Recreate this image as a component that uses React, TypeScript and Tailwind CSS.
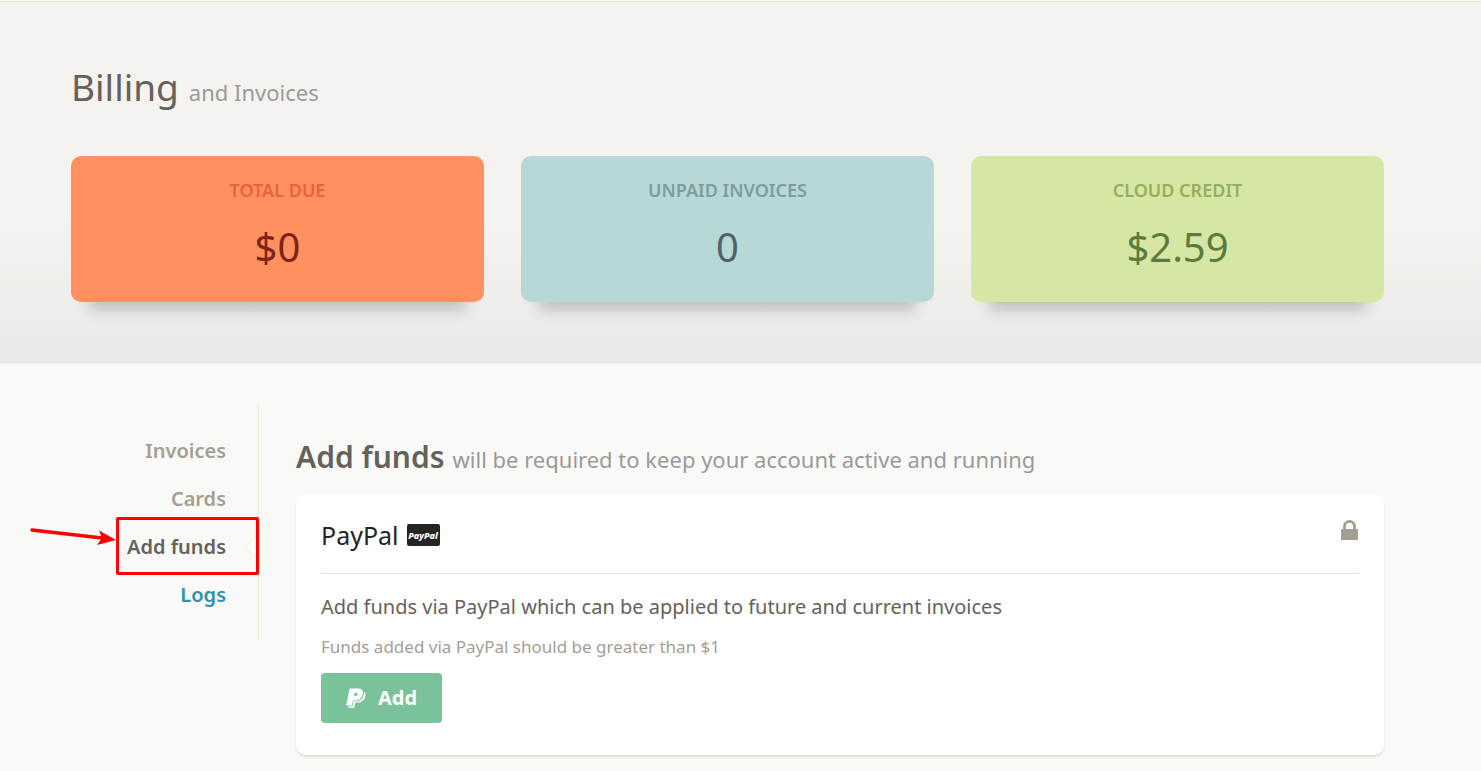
import React from "react";

type Stat = { label: string; value: string; card: string; labelColor: string; valueColor: string };

const stats: Stat[] = [
  { label: "Total due", value: "$0", card: "bg-[#ff9060]", labelColor: "text-[#e9633a]", valueColor: "text-[#7d2413]" },
  { label: "Unpaid invoices", value: "0", card: "bg-[#b8d8d8]", labelColor: "text-[#7a9e9f]", valueColor: "text-[#4f6367]" },
  { label: "Cloud credit", value: "$2.59", card: "bg-[#d6e6a5]", labelColor: "text-[#96ad5b]", valueColor: "text-[#5e7b3e]" },
];

const tabs = [
  { label: "Invoices", color: "text-[#a49e93]" },
  { label: "Cards", color: "text-[#a49e93]" },
  { label: "Add funds", color: "text-[#66615b]", active: true },
  { label: "Logs", color: "text-[#3091b2]" },
];

function StatCard({ stat }: { stat: Stat }) {
  return (
    <article
      className={`flex flex-col items-center rounded-[10px] pt-5 pb-[30px] shadow-[0_26px_14px_-18px_rgba(0,0,0,0.2)] ${stat.card}`}
    >
      <h2 className={`text-[18px] leading-7 font-semibold uppercase ${stat.labelColor}`}>{stat.label}</h2>
      <p className={`mt-[18px] text-[40px] leading-[50px] ${stat.valueColor}`}>{stat.value}</p>
    </article>
  );
}

function Callout() {
  return (
    <>
      <span className="pointer-events-none absolute -top-1.5 -right-px h-[58px] w-[143px] rounded-[2px] border-[3px] border-[#fe0000]" />
      <svg
        className="pointer-events-none absolute top-0.5 right-[142px] h-8 w-[88px]"
        viewBox="0 0 88 32"
        fill="none"
        aria-hidden="true"
      >
        <path d="M4 5 L74 13" stroke="#fe0000" strokeWidth="3.5" strokeLinecap="round" />
        <path d="M88 15 L71 5.500 L74 13 L69 20 Z" fill="#fe0000" />
      </svg>
    </>
  );
}

function LockIcon() {
  return (
    <svg className="h-[22px] w-[18px] shrink-0" viewBox="0 0 18 22" role="img" aria-label="Secure">
      <path d="M3.500 12 V7.500 A5 5.200 0 0 1 13.500 7.500 V12" fill="none" stroke="#a49e93" strokeWidth="2.800" />
      <rect y="10" width="17" height="11" rx="0.800" fill="#a49e93" />
    </svg>
  );
}

function PaypalGlyph() {
  return (
    <svg className="size-5" viewBox="0 0 20 20" fill="currentColor" aria-hidden="true">
      <path
        fillRule="evenodd"
        d="M3.600 0.500 H12 C15.800 0.500 17.500 2.600 16.700 6.200 C15.800 10.300 13 12.400 9.200 12.400 H7 L5.800 17.400 H0.200 Z M8.700 4.700 L7.900 8 H9 C10.500 8 11.300 7.400 11.600 6.200 C11.800 5.100 11.400 4.700 10.100 4.700 Z"
      />
      <path
        d="M18 3.300 C19.500 4.700 19.900 6.600 19.300 8.800 C18.300 12.500 15.300 14.600 11.300 14.600 H9.300 L8.100 19.700 H2.200 L2.500 18.200 H6.500 L7.700 13.200 H9.900 C14 13.200 16.900 10.900 17.700 6.700 C18 5.500 18.100 4.300 18 3.300 Z"
      />
    </svg>
  );
}

export default function App() {
  return (
    <div className="min-h-screen bg-[#f9f9f8] font-['Noto_Sans',sans-serif] text-[#66615b]">
      <header className="border-t border-[#fcfcf5] bg-[#f4f3ef]">
        <div className="border-t border-b border-t-[#e4e4da] border-b-[#f2f1ee] bg-linear-to-b from-[#f4f3ef] from-60% to-[#eae9e5] pt-[60px] pr-[97px] pb-[61px] pl-[71px]">
          <h1 className="flex items-baseline gap-2.5 text-[37px] leading-[50px]">
            Billing <small className="text-[22px] text-[#9a9a9a]">and Invoices</small>
          </h1>
          <div className="mt-[39px] grid grid-cols-3 gap-[37px]">
            {stats.map((s) => (
              <StatCard key={s.label} stat={s} />
            ))}
          </div>
        </div>
      </header>

      <div className="flex items-start gap-[37px] pt-10 pr-[97px] pb-4 pl-[71px]">
        <nav aria-label="Billing" className="w-[188px] shrink-0 border-r border-[#f1eae0] pt-[23px] pb-[22px]">
          <ul>
            {tabs.map((t) => (
              <li key={t.label} className="relative h-12">
                <a href="#" className={`block pr-8 text-right text-[20px] leading-[48px] font-semibold ${t.color}`}>
                  {t.label}
                </a>
                {t.active && (
                  <>
                    <svg
                      className="absolute top-2.5 -right-px h-7 w-[14px]"
                      viewBox="0 0 14 28"
                      aria-hidden="true"
                    >
                      <path d="M14 0.500 L0.500 14 L14 27.500" fill="#fffcf5" stroke="#f1eae0" />
                    </svg>
                    <Callout />
                  </>
                )}
              </li>
            ))}
          </ul>
        </nav>

        <main className="min-w-0 flex-1 pt-8">
          <h2 className="flex items-baseline gap-2 text-[30px] leading-[42px] font-semibold">
            Add funds
            <small className="text-[22px] font-normal text-[#9a9a9a]">
              will be required to keep your account active and running
            </small>
          </h2>
          <section className="mt-3.5 rounded-[10px] bg-white px-[25px] pt-[25px] pb-8 shadow-[0_2px_2px_rgba(204,197,185,0.5)]">
            <div className="flex items-start justify-between border-b border-[#e3e3e3] pb-[22px]">
              <h3 className="flex items-center gap-2 text-[25px] leading-8 text-[#252422]">
                PayPal
                <span className="flex h-[22px] w-[33px] items-center justify-center rounded-[2px] bg-[#252422] text-[9px] leading-none font-extrabold text-white italic">
                  PayPal
                </span>
              </h3>
              <LockIcon />
            </div>
            <p className="mt-4 text-[20px] leading-[34px]">
              Add funds via PayPal which can be applied to future and current invoices
            </p>
            <p className="mt-2 text-[17px] leading-[30px] text-[#a49e93]">
              Funds added via PayPal should be greater than $1
            </p>
            <button
              type="button"
              className="mt-[11px] flex h-[50px] items-center gap-3 rounded-[4px] bg-[#7ac29a] px-[25px] text-[20px] font-bold text-white"
            >
              <PaypalGlyph /> Add
            </button>
          </section>
        </main>
      </div>
    </div>
  );
}
